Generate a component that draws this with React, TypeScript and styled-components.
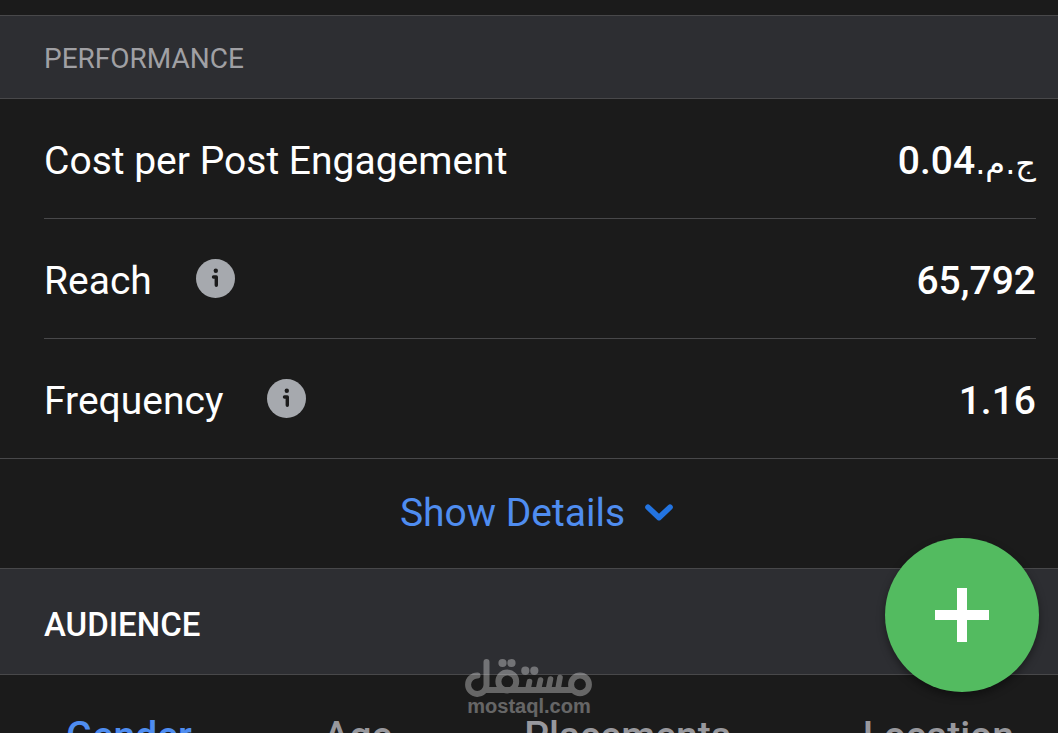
import React from "react";
import styled, { createGlobalStyle } from "styled-components";

const GlobalStyle = createGlobalStyle`
  * { box-sizing: border-box; }
  body {
    margin: 0;
    background: #1b1b1b;
    color: #fff;
    font-family: Roboto, "DejaVu Sans", sans-serif;
  }
`;

const line = "1px solid #48484a";

const Screen = styled.main`
  position: relative;
  height: 100vh;
  padding-top: 15px;
  overflow: hidden;
`;

const SectionHeader = styled.header<{ $major?: boolean }>`
  display: flex;
  align-items: center;
  height: ${(p) => (p.$major ? 107 : 84)}px;
  padding: ${(p) => (p.$major ? 6 : 4)}px 44px 0;
  background: #2d2e32;
  border-top: ${line};
  border-bottom: ${line};
`;

const SectionTitle = styled.h2<{ $major?: boolean }>`
  margin: 0;
  font-size: ${(p) => (p.$major ? 33 : 28)}px;
  font-weight: ${(p) => (p.$major ? 500 : 400)};
  line-height: 40px;
  color: ${(p) => (p.$major ? "#fff" : "#a0a0a4")};
`;

const Metrics = styled.dl`
  margin: 0;
  padding: 0 22px 0 44px;
`;

const Metric = styled.div`
  display: flex;
  align-items: center;
  height: 120px;
  padding-top: 4px;
  border-bottom: ${line};

  &:last-child {
    height: 119px;
    border-bottom: 0;
  }
`;

const MetricName = styled.dt`
  display: flex;
  align-items: center;
  gap: 44px;
  font-size: 39px;
  line-height: 48px;
`;

const MetricValue = styled.dd`
  margin: 0 0 0 auto;
  font-size: 39px;
  font-weight: 500;
  line-height: 48px;
`;

const Currency = styled.span`
  font-family: "DejaVu Sans", sans-serif;
  font-size: 32px;
  font-weight: 400;
  line-height: 32px;
`;

const InfoButton = styled.button`
  display: flex;
  margin-bottom: 4px;
  padding: 0;
  border: 0;
  border-radius: 50%;
  background: none;
`;

const DetailsButton = styled.button`
  display: flex;
  align-items: center;
  justify-content: center;
  gap: 20px;
  width: 100%;
  height: 110px;
  padding: 0 0 2px 15px;
  border: 0;
  border-top: ${line};
  background: none;
  color: #4f8df0;
  font-family: inherit;
  font-size: 39px;
  line-height: 48px;
`;

const Tabs = styled.nav`
  display: flex;
  justify-content: space-between;
  padding: 36px 44px 0 66px;
`;

const Tab = styled.button<{ $active?: boolean }>`
  padding: 0;
  border: 0;
  background: none;
  color: ${(p) => (p.$active ? "#4f8df0" : "#98989d")};
  font-family: inherit;
  font-size: 39px;
  font-weight: 500;
  line-height: 50px;
`;

const AddButton = styled.button`
  position: absolute;
  right: 19px;
  bottom: 41px;
  display: flex;
  align-items: center;
  justify-content: center;
  width: 154px;
  height: 154px;
  padding: 0;
  border: 0;
  border-radius: 50%;
  background: #53bb60;
  box-shadow: 0 4px 8px rgba(0, 0, 0, 0.4);
`;

const Watermark = styled.div`
  position: absolute;
  right: 0;
  bottom: 19px;
  left: 0;
  display: flex;
  flex-direction: column;
  align-items: center;
  color: #fff;
  font-family: "Liberation Sans", Arial, sans-serif;
  font-size: 20px;
  font-weight: 700;
  line-height: 16px;
  opacity: 0.33;
  pointer-events: none;
`;

const InfoIcon = () => (
  <svg width="39" height="39" viewBox="0 0 39 39" aria-hidden="true">
    <circle cx="19.5" cy="19.5" r="19.5" fill="#a6a9ae" />
    <circle cx="19.8" cy="11.7" r="2.2" fill="#1b1b1b" />
    <path d="M17.5 18H20.3V26.2" fill="none" stroke="#1b1b1b" strokeWidth="3.4" strokeLinecap="round" strokeLinejoin="round" />
  </svg>
);

const ChevronIcon = () => (
  <svg width="28" height="18" viewBox="0 0 28 18" aria-hidden="true">
    <path d="M3 3.2L14 13.6L25 3.2" fill="none" stroke="#2374e1" strokeWidth="5.6" strokeLinecap="round" strokeLinejoin="round" />
  </svg>
);

const PlusIcon = () => (
  <svg width="54" height="54" viewBox="0 0 54 54" aria-hidden="true">
    <path d="M22 0h10v22h22v10H32v22H22V32H0V22h22z" fill="#fff" />
  </svg>
);

const WatermarkLogo = () => (
  <svg width="128" height="40" viewBox="0 0 128 40" fill="none" stroke="#fff" strokeWidth="6" strokeLinecap="round" aria-hidden="true">
    <path d="M12.500 17.500A9.200 9.200 0 1 0 21.500 27V4" />
    <path d="M18 32H108" strokeLinecap="butt" />
    <circle cx="42.300" cy="23.500" r="8.900" />
    <circle cx="115" cy="26.400" r="8.900" />
    <path d="M64.500 23.500L63 31M75.500 22L73.500 31M85.500 21L83.500 31M95 19.500L93 31" strokeWidth="5.600" />
    <g fill="#fff" stroke="none">
      <circle cx="37.500" cy="5" r="4.100" />
      <circle cx="46.500" cy="5" r="4.100" />
      <circle cx="60.300" cy="12.700" r="4.100" />
      <circle cx="69.300" cy="12.700" r="4.100" />
    </g>
  </svg>
);

const metrics = [
  { name: "Cost per Post Engagement", value: "0.04", currency: "ج.م." },
  { name: "Reach", value: "65,792", info: true },
  { name: "Frequency", value: "1.16", info: true },
];

const tabs = ["Gender", "Age", "Placements", "Location"];

export default function App() {
  return (
    <Screen>
      <GlobalStyle />
      <SectionHeader>
        <SectionTitle>PERFORMANCE</SectionTitle>
      </SectionHeader>
      <Metrics>
        {metrics.map((m) => (
          <Metric key={m.name}>
            <MetricName>
              {m.name}
              {m.info && (
                <InfoButton type="button" aria-label={`About ${m.name}`}>
                  <InfoIcon />
                </InfoButton>
              )}
            </MetricName>
            <MetricValue dir={m.currency ? "rtl" : "ltr"}>
              {m.currency && <Currency>{m.currency}</Currency>}
              {m.value}
            </MetricValue>
          </Metric>
        ))}
      </Metrics>
      <DetailsButton type="button">
        Show Details
        <ChevronIcon />
      </DetailsButton>
      <SectionHeader $major>
        <SectionTitle $major>AUDIENCE</SectionTitle>
      </SectionHeader>
      <Tabs>
        {tabs.map((tab, i) => (
          <Tab key={tab} type="button" $active={i === 0}>
            {tab}
          </Tab>
        ))}
      </Tabs>
      <Watermark>
        <WatermarkLogo />
        mostaql.com
      </Watermark>
      <AddButton type="button" aria-label="Add">
        <PlusIcon />
      </AddButton>
    </Screen>
  );
}
